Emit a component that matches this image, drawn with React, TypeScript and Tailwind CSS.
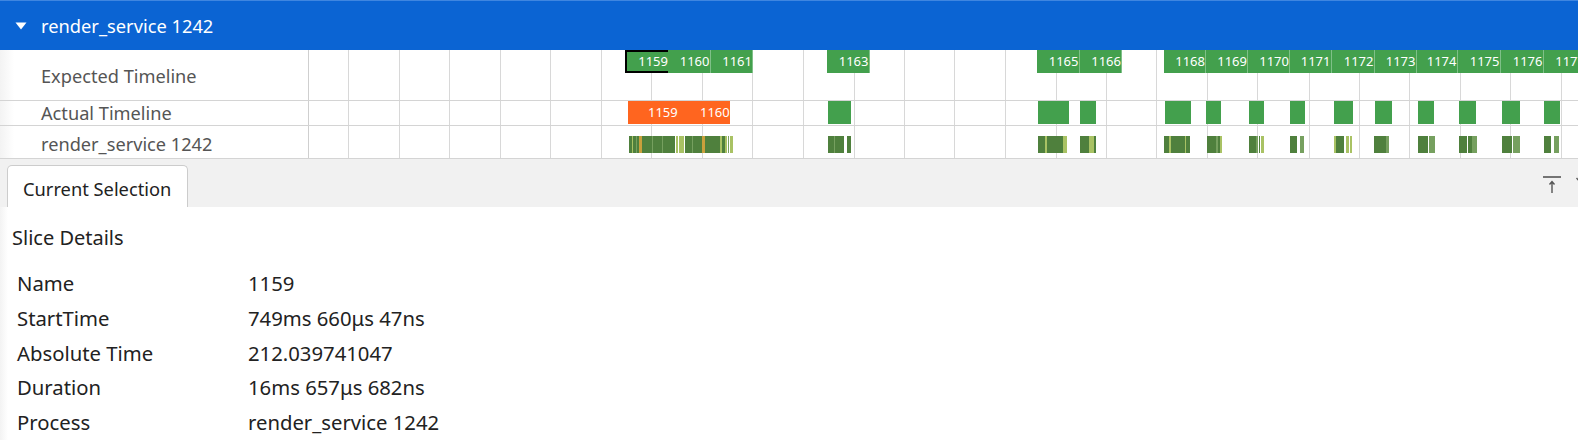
const font = "font-['Noto_Sans',sans-serif]";

// x positions below are page pixels; the canvas starts right after the 308px label column
const CANVAS_X = 309;

const gridLines = [348, 399, 449, 500, 550, 601, 651, 702, 752, 803, 854, 904, 954, 1005, 1056, 1106, 1156, 1207, 1257, 1309, 1359, 1409, 1460, 1510, 1561];

const expected = [
  { name: "1159", from: 625, to: 668 },
  { name: "1160", from: 668, to: 710.5 },
  { name: "1161", from: 710.5, to: 753 },
  { name: "1163", from: 827, to: 869.5 },
  { name: "1165", from: 1037, to: 1079.5 },
  { name: "1166", from: 1079.5, to: 1122 },
  { name: "1168", from: 1164, to: 1206 },
  { name: "1169", from: 1206, to: 1248 },
  { name: "1170", from: 1248, to: 1290 },
  { name: "1171", from: 1290, to: 1331.5 },
  { name: "1172", from: 1331.5, to: 1374.5 },
  { name: "1173", from: 1374.5, to: 1416.5 },
  { name: "1174", from: 1416.5, to: 1457.5 },
  { name: "1175", from: 1457.5, to: 1500.5 },
  { name: "1176", from: 1500.5, to: 1543.5 },
  { name: "1177", from: 1543.5, to: 1586 },
];

const actual = [
  [828, 851],
  [1038, 1069],
  [1080, 1096],
  [1165, 1191],
  [1206, 1221],
  [1249, 1264],
  [1290, 1305],
  [1334, 1352.5],
  [1375, 1391.5],
  [1417.5, 1434],
  [1459, 1475.5],
  [1501.5, 1520],
  [1544, 1559.5],
];

const D = "#4f803d";
const M = "#76a05f";
const L = "#a9c264";
const G = "#c9a03c";

const cpu: [number, number, string][] = [
  [629, 639, D], [632, 633, L], [636, 637, M], [639, 642, G], [642, 675, D], [652, 653, M], [662, 663, M],
  [676, 678, L], [679, 684, L], [685, 702, D], [692, 693, M], [702, 705, G], [705, 720, D], [720, 722, L],
  [722, 725, D], [725, 727, L], [728, 729, M], [730, 732.5, L],
  [827.5, 843.5, D], [834, 835, M], [846.5, 850.5, D],
  [1037.5, 1063, D], [1045, 1046.5, L], [1063, 1066.5, L], [1080, 1089, D], [1089, 1094, L], [1094, 1095.5, D],
  [1164, 1190, D], [1169, 1170.5, L], [1184.5, 1186, L], [1206.5, 1220, D], [1216, 1218, M], [1220, 1221.5, L],
  [1249, 1256, D], [1256, 1258, M], [1259, 1260, D], [1261, 1264, L], [1290, 1297, D], [1300, 1304, M],
  [1333.5, 1336, L], [1336, 1344, D], [1346, 1349, L], [1350, 1352, L],
  [1374, 1386, D], [1386, 1389, M], [1417.5, 1428, D], [1429, 1435, M],
  [1459, 1467, D], [1468, 1472, D], [1472, 1476.5, M], [1501.5, 1512, D], [1513, 1520, M],
  [1544, 1551, D], [1554, 1559, M],
];

const details = [
  ["Name", "1159"],
  ["StartTime", "749ms 660μs 47ns"],
  ["Absolute Time", "212.039741047"],
  ["Duration", "16ms 657μs 682ns"],
  ["Process", "render_service 1242"],
];

function Row({ label, height, labelPad, children }: { label: string; height: string; labelPad: string; children?: React.ReactNode }) {
  return (
    <div className={`flex border-b border-[#d4d4d4] ${height}`}>
      <div className={`flex w-[309px] shrink-0 items-center border-r border-[#cfcfcf] bg-linear-to-r from-[#f3f3f3] to-white to-[14px] pl-[41px] text-[18.2px] text-[#555] ${labelPad}`}>
        {label}
      </div>
      <div className="relative flex-1 overflow-hidden">
        {gridLines.map((x) => (
          <div key={x} className="absolute inset-y-0 w-px bg-[#d8d8d8]" style={{ left: x - CANVAS_X }} />
        ))}
        {children}
      </div>
    </div>
  );
}

export default function App() {
  return (
    <div className={`h-[442px] w-[1578px] overflow-hidden bg-white ${font}`}>
      <div className="flex h-[50px] items-center border-t border-[#3f86e0] bg-[#0b64d3] text-[18.3px] text-white">
        <svg width="12" height="8" viewBox="0 0 12 8" className="ml-[15px] mr-[14px]">
          <path d="M0.5 0.5H11.5L6 7.5Z" fill="#fff" />
        </svg>
        render_service 1242
      </div>

      <Row label="Expected Timeline" height="h-[51px]" labelPad="pt-[4px]">
        {expected.map((s, i) => (
          <div
            key={s.name}
            className={`absolute top-0 flex h-[23px] items-center justify-end overflow-hidden whitespace-nowrap border-r border-[#7fc088] bg-[#43a04d] text-[13px] text-white ${i === 0 ? "border-t-2 border-b-2 border-l-2 border-r-0 border-black" : ""}`}
            style={{ left: s.from - CANVAS_X, width: s.to - s.from }}
          >
            {s.name}
          </div>
        ))}
      </Row>

      <Row label="Actual Timeline" height="h-[25px]" labelPad="pt-[2px]">
        <div
          className="absolute top-0 flex h-[23px] items-center bg-[#ff651f] text-[13px] text-[#fff]"
          style={{ left: 628 - CANVAS_X, width: 102 }}
        >
          <span className="ml-5 w-[52px]">1159</span>
          <span>1160</span>
        </div>
        {actual.map(([from, to]) => (
          <div key={from} className="absolute top-0 h-[23px] bg-[#43a04d]" style={{ left: from - CANVAS_X, width: to - from }} />
        ))}
      </Row>

      <Row label="render_service 1242" height="h-[33px]" labelPad="pt-[5px]">
        {cpu.map(([from, to, color], i) => (
          <div
            key={i}
            className="absolute top-[10px] h-[17px]"
            style={{ left: from - CANVAS_X, width: to - from, background: color }}
          />
        ))}
      </Row>

      <div className="flex h-[48px] items-end justify-between bg-[#f1f1f1] pl-[7px]">
        <div className="flex h-[42px] w-[181px] items-center rounded-t-[5px] border border-b-0 border-[#cccccc] bg-white pl-[15px] pt-[5px] text-[18.3px] text-[#222]">
          Current Selection
        </div>
        <div className="mb-[12px] mr-[-5px] flex items-start gap-[14px]">
          <svg width="20" height="20" viewBox="0 0 20 20" fill="none" stroke="#555">
            <path d="M1 2H19" strokeWidth="1.6" />
            <path d="M10 18V7M7.5 9.5L10 6.5L12.5 9.5" strokeWidth="1.4" />
          </svg>
          <svg width="7" height="20" viewBox="0 0 7 20" fill="none" stroke="#555">
            <path d="M0.5 3L4 7L7 3" strokeWidth="1.4" />
          </svg>
        </div>
      </div>

      <div className="bg-linear-to-r from-[#f3f3f3] to-white to-[8px] pl-3 text-[#222]">
        <div className="pt-[17px] text-[20px] leading-[27px]">Slice Details</div>
        <div className="mt-[15px] grid grid-cols-[231px_1fr] pl-[5px] text-[20.3px] leading-[34.8px]">
          {details.map(([k, v]) => (
            <div key={k} className="contents">
              <div>{k}</div>
              <div>{v}</div>
            </div>
          ))}
        </div>
      </div>
    </div>
  );
}
